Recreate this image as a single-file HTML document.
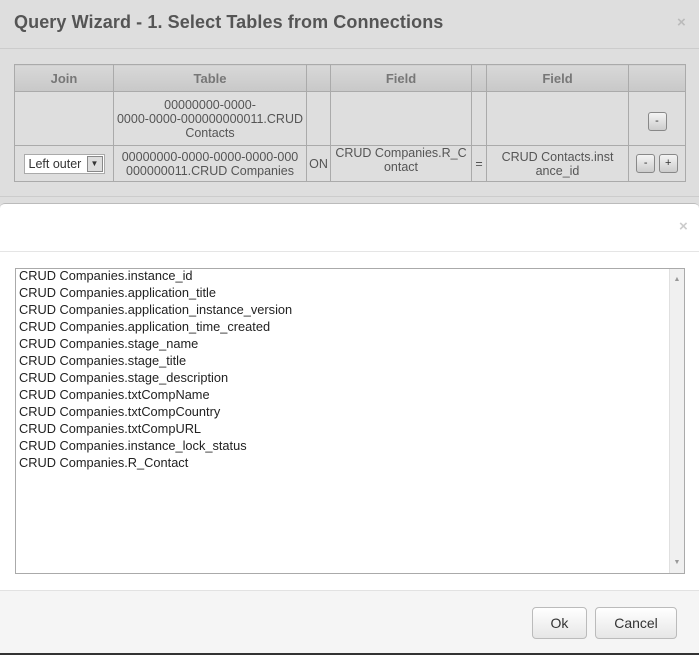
<!DOCTYPE html>
<html><head><meta charset="utf-8"><style>
*{box-sizing:border-box;margin:0;padding:0}
body{width:699px;height:654px;overflow:hidden;background:#dedede;font-family:"Liberation Sans",Arial,sans-serif;position:relative}
.abs{position:absolute}
h1{position:absolute;left:14px;top:12px;font-size:18px;font-weight:bold;color:#555;letter-spacing:0.1px}
table{position:absolute;left:14px;top:64px;border-collapse:collapse;font-size:12.5px;color:#555;table-layout:fixed}
td,th{border:1px solid #aaa;text-align:center;padding:0 1px}
th{height:27px;background:linear-gradient(#d8d8d8,#c8c8c8);color:#777;font-size:13px}
.btn{display:inline-block;width:19px;height:19px;border:1px solid #888;border-radius:3px;background:linear-gradient(#f4f4f4,#ccc);font-size:11px;line-height:17px;color:#333;text-align:center}
.sel{display:inline-block;border:1px solid #aaa;background:#fff;height:20px;width:81px;text-align:left;padding-left:4px;line-height:18px;position:relative;color:#333}
.sel span{position:absolute;right:1px;top:1px;width:16px;height:16px;border:1px solid #888;background:#ddd;font-size:8px;line-height:14px;text-align:center}
.dlg{position:absolute;left:0;top:203px;width:699px;height:451px;background:#fff;border-top:1px solid #bbb;border-radius:5px 5px 0 0}
.list{position:absolute;left:15px;top:64px;width:670px;height:306px;border:1px solid #aaa;font-size:12.8px;color:#222;padding:0 0 0 3px;line-height:17px}
.items{margin-top:-2px}
.sb{position:absolute;right:0;top:0;width:15px;height:304px;background:#f0f0f0;border-left:1px solid #e0e0e0;font-size:7px;color:#999;text-align:center}
.foot{position:absolute;left:0;top:386px;width:699px;height:65px;background:#f5f5f5;border-top:1px solid #e2e2e2;border-bottom:2px solid #333}
.b2{position:absolute;top:16px;height:32px;border:1px solid #bbb;border-radius:4px;background:linear-gradient(#fff,#e6e6e6);font-size:14px;color:#333;text-align:center;line-height:30px}
</style></head><body>
<h1>Query Wizard - 1. Select Tables from Connections</h1>
<div class="abs" style="left:677px;top:14px;color:#bbb;font-size:15px;font-weight:bold">×</div>
<div class="abs" style="left:0;top:48px;width:699px;height:1px;background:#ccc"></div>
<table>
<tr><th style="width:99px">Join</th><th style="width:193px">Table</th><th style="width:24px"></th><th style="width:141px">Field</th><th style="width:15px"></th><th style="width:142px">Field</th><th style="width:57px"></th></tr>
<tr style="height:54px"><td></td><td>00000000-0000-<br>0000-0000-000000000011.CRUD<br>Contacts</td><td></td><td></td><td></td><td></td><td><span class="btn" style="margin-top:6px">-</span></td></tr>
<tr style="height:36px"><td><span class="sel">Left outer<span>▼</span></span></td><td>00000000-0000-0000-0000-000<br>000000011.CRUD Companies</td><td>ON</td><td style="vertical-align:top">CRUD Companies.R_C<br>ontact</td><td>=</td><td>CRUD Contacts.inst<br>ance_id</td><td><span class="btn">-</span> <span class="btn">+</span></td></tr>
</table>
<div class="abs" style="left:0;top:196px;width:699px;height:1px;background:#ccc"></div>
<div class="dlg">
<div class="abs" style="left:679px;top:14px;color:#ccc;font-size:15px;font-weight:bold">×</div>
<div class="abs" style="left:0;top:47px;width:699px;height:1px;background:#e5e5e5"></div>
<div class="list"><div class="items">CRUD Companies.instance_id<br>CRUD Companies.application_title<br>CRUD Companies.application_instance_version<br>CRUD Companies.application_time_created<br>CRUD Companies.stage_name<br>CRUD Companies.stage_title<br>CRUD Companies.stage_description<br>CRUD Companies.txtCompName<br>CRUD Companies.txtCompCountry<br>CRUD Companies.txtCompURL<br>CRUD Companies.instance_lock_status<br>CRUD Companies.R_Contact</div>
<div class="sb"><div style="margin-top:2px">▲</div><div style="position:absolute;bottom:2px;width:14px">▼</div></div></div>
<div class="foot">
<div class="b2" style="left:532px;width:55px">Ok</div>
<div class="b2" style="left:595px;width:82px">Cancel</div>
</div>
</div>
</body></html>
